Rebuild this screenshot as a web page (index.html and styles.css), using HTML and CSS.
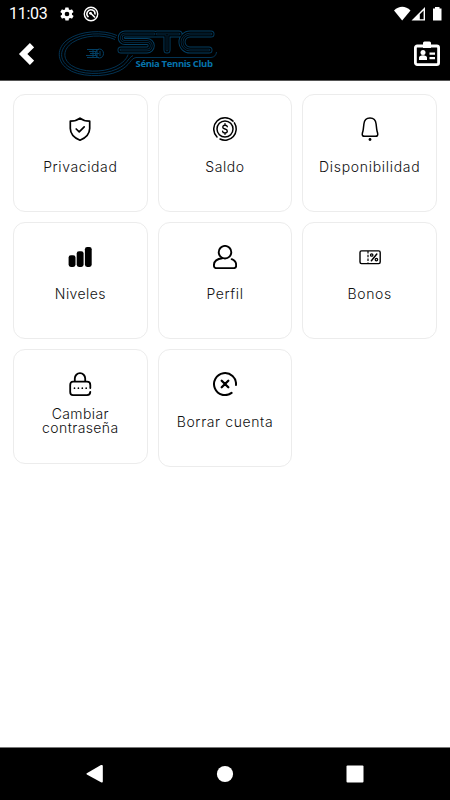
FILE: index.html
```html
<!DOCTYPE html>
<html lang="es">
<head>
    <meta charset="UTF-8">
    <meta name="viewport" content="width=device-width, initial-scale=1.0">
    <title>Sénia Tennis Club</title>
    <link rel="stylesheet" href="styles.css">
</head>
<body>

    <header class="top">
        <div class="status">
            <span class="time">11:03</span>
            <svg class="gear" width="16" height="16" viewBox="0 0 24 24"><path fill="#fff" fill-rule="evenodd" d="M19.4 13a7.500 7.500 0 0 0 0-2l2.100-1.600a.5.5 0 0 0 .1-.6l-2-3.500a.5.5 0 0 0-.6-.2l-2.500 1a7.300 7.300 0 0 0-1.700-1l-.4-2.600a.5.5 0 0 0-.5-.4h-4a.5.5 0 0 0-.5.4L9 5.100a7.300 7.300 0 0 0-1.700 1l-2.500-1a.5.5 0 0 0-.6.2l-2 3.500a.5.5 0 0 0 .1.6L4.500 11a7.500 7.500 0 0 0 0 2l-2.100 1.600a.5.5 0 0 0-.1.6l2 3.500a.5.5 0 0 0 .6.2l2.500-1a7.300 7.300 0 0 0 1.700 1l.4 2.600a.5.5 0 0 0 .5.4h4a.5.5 0 0 0 .5-.4l.4-2.600a7.300 7.300 0 0 0 1.700-1l2.500 1a.5.5 0 0 0 .6-.2l2-3.500a.5.5 0 0 0-.1-.6zM12 15.500a3.500 3.500 0 1 1 0-7 3.500 3.500 0 0 1 0 7z"/></svg>
            <svg class="scan" width="16" height="16" viewBox="0 0 16 16" fill="none" stroke="#fff">
                <circle cx="8" cy="8" r="6.700" stroke-width="1.400"/>
                <path stroke-width="1.600" d="M5.500 11A4 4 0 1 1 11.900 8.500M7 6.500l5 5"/>
                <circle cx="7.500" cy="7.300" r="1.400" fill="#fff" stroke="none"/>
            </svg>
            <svg class="signals" width="50" height="16" viewBox="0 0 50 16">
                <path fill="#fff" d="M0 4.500C5-.4 11.500-.4 16.500 4.500L8.200 14.500z"/>
                <path fill="#fff" fill-rule="evenodd" d="M31 1v13.500H17.500zM29.600 4.500l-3.800 3.800v5h3.800z"/>
                <path fill="#fff" d="M41 1h4.500v1.500H47.500v12h-8.500v-12H41z"/>
            </svg>
        </div>
        <div class="bar">
            <svg class="back" width="16" height="24" viewBox="0 0 16 24" fill="none" stroke="#fff" stroke-width="6"><path d="M14 3.200L5.200 12l8.800 8.800"/></svg>
            <svg class="logo" width="170" height="56" viewBox="50 24 170 56" fill="none">
                <!-- racket outline -->
                <g stroke="#03395c" stroke-width=".9">
                    <path d="M117 35.500C103 29 80 31 68 39.500C56 48 57 61 67 68.500C78 77 104 78 119 71C131 65 130 58.500 136 57.500H211Q216 57 216.500 52"/>
                    <path d="M116 37.500C103 31.500 82 33 70 41C59 49 59 60 69 67C80 75 103 75.500 117 69C128 64 127 59 133 55.500"/>
                    <path d="M115 39.500C103 34 84 35 72.500 42.500C63 49 62 59 71.500 65.500C82 72.500 102 73 115 67C124 62.500 127 58 128 54.500"/>
                </g>
                <!-- ball -->
                <g stroke="#033e62" stroke-width="1">
                    <ellipse cx="99.500" cy="53.500" rx="4" ry="4.500"/>
                    <path d="M87 49.500H99M89 51.500H97M90 53.500H99M86 55.500H97M87 57.500H99M97 50v7M100 51v5M93 50v7"/>
                </g>
                <!-- letters: nested outlines -->
                <g stroke-linecap="round">
                    <path d="M154 34H125a3.600 3.600 0 0 0 0 7.500H147a4 4 0 0 1 0 8.500H121M157 34H179M167 34V50M211 34H190a8 8 0 0 0 0 16H209" stroke="#033e62" stroke-width="7"/>
                    <path d="M154 34H125a3.600 3.600 0 0 0 0 7.500H147a4 4 0 0 1 0 8.500H121M157 34H179M167 34V50M211 34H190a8 8 0 0 0 0 16H209" stroke="#000" stroke-width="5.200"/>
                    <path d="M154 34H125a3.600 3.600 0 0 0 0 7.500H147a4 4 0 0 1 0 8.500H121M157 34H179M167 34V50M211 34H190a8 8 0 0 0 0 16H209" stroke="#03304e" stroke-width="2.600"/>
                    <path d="M154 34H125a3.600 3.600 0 0 0 0 7.500H147a4 4 0 0 1 0 8.500H121M157 34H179M167 34V50M211 34H190a8 8 0 0 0 0 16H209" stroke="#000" stroke-width="1.200"/>
                </g>
                <text class="club" x="135.500" y="66.500">Sénia Tennis Club</text>
            </svg>
            <svg class="badge" width="26" height="26" viewBox="0 0 26 26">
                <rect x="1.400" y="5" width="23.200" height="18.600" rx="1.800" fill="none" stroke="#fff" stroke-width="2.800"/>
                <path fill="#fff" d="M10.500.4h5q1.500 0 1.500 1.500v5H9v-5Q9 .4 10.500.4zM5 19v-2.500Q5.500 14.500 9 14.300Q12.500 14.500 13 16.500V19zM15.500 11.500H21v2.200h-5.500zM15.500 16H21v2.200h-5.500z"/>
                <circle cx="9" cy="11.500" r="2.500" fill="#fff"/>
            </svg>
        </div>
    </header>

    <main class="grid">
        <a class="card">
            <svg class="icon" viewBox="0 0 24 24" stroke-width="1.700">
                <path d="M12 1.200Q16 4.300 21.700 4.200V11.500Q21.500 19.500 12 23.200Q2.500 19.500 2.300 11.500V4.200Q8 4.300 12 1.200z"/>
                <path d="M8.200 12l3 2.800 5-5"/>
            </svg>
            <span class="label">Privacidad</span>
        </a>
        <a class="card">
            <svg class="icon" viewBox="0 0 24 24">
                <path stroke-width="1.500" d="M4 20A11.200 11.200 0 0 1 20 4.100M21.400 5.900A11.200 11.200 0 0 1 7 22"/>
                <circle cx="12" cy="12" r="8" stroke-width="1.500"/>
                <path stroke-width="1.400" d="M14.300 9.700Q14 8.200 12 8.200T9.700 10Q9.700 11.500 12 12T14.300 14.200Q14.200 15.900 12 15.900T9.600 14.300M12 6.800v1.400M12 15.900v1.400"/>
            </svg>
            <span class="label">Saldo</span>
        </a>
        <a class="card">
            <svg class="icon" viewBox="0 0 24 24">
                <path stroke-width="1.500" d="M12 .9C8 .9 6.200 3.500 5.900 7L5.300 12.200Q5.100 14 4.400 16Q3.600 19.300 6.500 19.300H17.500Q20.400 19.300 19.600 16Q18.900 14 18.700 12.200L18.100 7C17.800 3.500 16 .9 12 .9z"/>
                <circle class="solid" cx="12" cy="22.500" r="1.400"/>
            </svg>
            <span class="label wide">Disponibilidad</span>
        </a>
        <a class="card">
            <svg class="icon" viewBox="0 0 24 24">
                <rect class="solid" x=".6" y="10.300" width="6.900" height="11.600" rx="2.300"/>
                <rect class="solid" x="8.700" y="6.300" width="6.900" height="15.600" rx="2.300"/>
                <rect class="solid" x="16.900" y="2" width="6.800" height="19.900" rx="2.300"/>
            </svg>
            <span class="label tight">Niveles</span>
        </a>
        <a class="card">
            <svg class="icon" viewBox="0 0 24 24" stroke-width="1.900">
                <circle cx="12" cy="7.200" r="6.300"/>
                <path d="M9.300 13.300Q.9 14.200.9 20.500Q.9 23.100 3 23.100H21Q23.100 23.100 23.100 21V19.500Q23.100 16 18.700 14.200"/>
            </svg>
            <span class="label">Perfil</span>
        </a>
        <a class="card">
            <svg class="icon" viewBox="0 0 24 24">
                <rect x="2" y="5.900" width="20.200" height="12.700" rx="1.500" stroke-width="1.400"/>
                <path stroke-width="1.200" stroke-dasharray="2.500 1.300" stroke-linecap="butt" d="M10 6v12.500"/>
                <path stroke-width="1.500" d="M18.800 9l-5.400 6.700"/>
                <circle cx="13.700" cy="10" r="1.200" stroke-width="1.300"/>
                <circle cx="18.400" cy="14.600" r="1.200" stroke-width="1.300"/>
            </svg>
            <span class="label">Bonos</span>
        </a>
        <a class="card short">
            <svg class="icon" viewBox="0 0 24 24" stroke-width="1.800">
                <path d="M6.800 9.500V6.500a5.200 5.300 0 0 1 10.400 0V9.500M22.300 16V13Q22.300 9.700 19 9.700H5Q2.200 9.700 2.200 13V20Q2.200 23.100 5 23.100H19Q22.300 23.100 22.300 19.800"/>
                <path stroke-width="1.700" stroke-dasharray="0 3.900" d="M6.500 16.200h12.500"/>
            </svg>
            <span class="label tight">Cambiar contraseña</span>
        </a>
        <a class="card">
            <svg class="icon" viewBox="0 0 24 24" stroke-width="2">
                <path d="M23 13A11 11 0 1 0 18.600 20.900"/>
                <path stroke-width="2.300" d="M8.700 8.700l6.600 6.600M15.300 8.700l-6.600 6.600"/>
            </svg>
            <span class="label">Borrar cuenta</span>
        </a>
    </main>

    <nav class="nav">
        <svg width="18" height="20" viewBox="0 0 18 20"><path fill="#fff" d="M.8 9.300L15 1.100Q16.800.4 16.800 2V17.500Q16.800 19.200 15 18.300L.8 10.500Q0 9.900.8 9.300z"/></svg>
        <svg width="18" height="20" viewBox="0 0 18 20"><circle cx="9" cy="10" r="8.100" fill="#fff"/></svg>
        <svg width="18" height="20" viewBox="0 0 18 20"><rect x=".5" y="1.500" width="17" height="17" rx="1" fill="#fff"/></svg>
    </nav>

</body>
</html>
```

FILE: styles.css
```css
* {
    box-sizing: border-box;
}
body {
    margin: 0;
    height: 100vh;
    display: flex;
    flex-direction: column;
    background: #fff;
    color: #111;
    font-family: Inter, "Open Sans", sans-serif;
}

/* header */
.top {
    height: 81px;
    background: #000;
    border-bottom: 1px solid #555;
}
.status {
    display: flex;
    align-items: center;
    height: 24px;
    padding: 3px 6px 0 9px;
}
.time {
    width: 50px;
    color: #fff;
    font: 16px/20px Roboto, sans-serif;
    letter-spacing: -0.3px;
}
.scan {
    margin-left: 8px;
}
.signals {
    margin-left: auto;
}
.bar {
    display: flex;
    align-items: flex-start;
    padding: 0 10px 0 18px;
}
.back {
    margin-top: 18px;
}
.logo {
    margin-left: 16px;
    overflow: visible;
}
.club {
    font: bold 9.500px "Open Sans", sans-serif;
    letter-spacing: -0.35px;
    fill: #0673ab;
}
.badge {
    margin: 17px 0 0 auto;
}

/* options */
.grid {
    flex: 1;
    display: grid;
    grid-template-columns: repeat(3, 1fr);
    align-content: start;
    align-items: start;
    gap: 10px;
    padding: 13px 13px 0;
}
.card {
    display: flex;
    flex-direction: column;
    align-items: center;
    height: 117.500px;
    padding-top: 22px;
    border: 1px solid #ececec;
    border-radius: 12px;
}
.card.short {
    height: 114.500px;
}
.icon {
    width: 24px;
    height: 24px;
    fill: none;
    stroke: #000;
    stroke-linecap: round;
    stroke-linejoin: round;
}
.solid {
    fill: #000;
    stroke: none;
}
.label {
    margin-top: 18.500px;
    font-size: 14px;
    font-weight: 300;
    line-height: 14px;
    letter-spacing: 0.6px;
    text-align: center;
}
.wide {
    letter-spacing: 0.7px;
}
.tight {
    letter-spacing: 0.4px;
}
.short .label {
    width: 90px;
    margin-top: 10.500px;
}

/* system navigation */
.nav {
    display: flex;
    justify-content: space-between;
    align-items: center;
    height: 53px;
    padding: 0 86px;
    background: #000;
    border-top: 1px solid #777;
}
```
